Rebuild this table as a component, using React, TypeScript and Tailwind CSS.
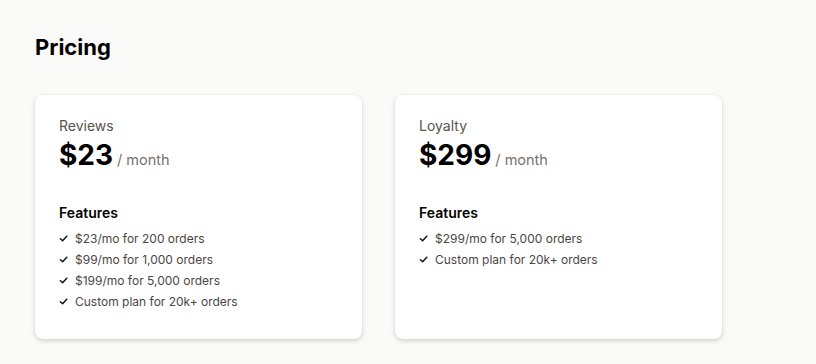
import React from "react";

const plans = [
  {
    name: "Reviews",
    price: "$23",
    features: ["$23/mo for 200 orders", "$99/mo for 1,000 orders", "$199/mo for 5,000 orders", "Custom plan for 20k+ orders"],
  },
  {
    name: "Loyalty",
    price: "$299",
    features: ["$299/mo for 5,000 orders", "Custom plan for 20k+ orders"],
  },
];

function Check() {
  return (
    <svg width="9" height="9" viewBox="0 0 10 10" fill="none" className="shrink-0">
      <path d="M1.5 5.2 L4 7.6 L8.6 2.4" stroke="#111" strokeWidth="1.6" strokeLinecap="round" strokeLinejoin="round" />
    </svg>
  );
}

export default function App() {
  return (
    <div className="min-h-[364px] bg-[#fafaf9] px-[35px] pt-[32px] pb-[24px]" style={{ fontFamily: "Inter, 'Noto Sans', sans-serif" }}>
      <h1 className="text-[22px] leading-[30px] font-bold text-black">Pricing</h1>
      <div className="mt-[33px] flex gap-[33px] items-stretch">
        {plans.map((p) => (
          <div key={p.name} className="w-[327px] bg-white rounded-lg shadow-[0_2px_5px_rgba(0,0,0,0.16),0_0_2px_rgba(0,0,0,0.06)] px-[24px] pt-[21px] pb-[27px]">
            <div className="text-[14px] leading-[20px] text-[#57534e]">{p.name}</div>
            <div className="flex items-baseline gap-[4px] mt-[1px]">
              <span className="text-[28px] leading-[36px] font-bold text-black">{p.price}</span>
              <span className="text-[14.5px] text-[#78716c]">/ month</span>
            </div>
            <div className="mt-[30px] text-[14px] leading-[20px] font-semibold text-black">Features</div>
            <ul className="mt-[5px] flex flex-col">
              {p.features.map((f) => (
                <li key={f} className="flex items-center gap-[7px] text-[12px] leading-[21px] text-[#4b4643]">
                  <span className="w-[9px] flex items-center"><Check /></span>
                  <span>{f}</span>
                </li>
              ))}
            </ul>
          </div>
        ))}
      </div>
    </div>
  );
}
